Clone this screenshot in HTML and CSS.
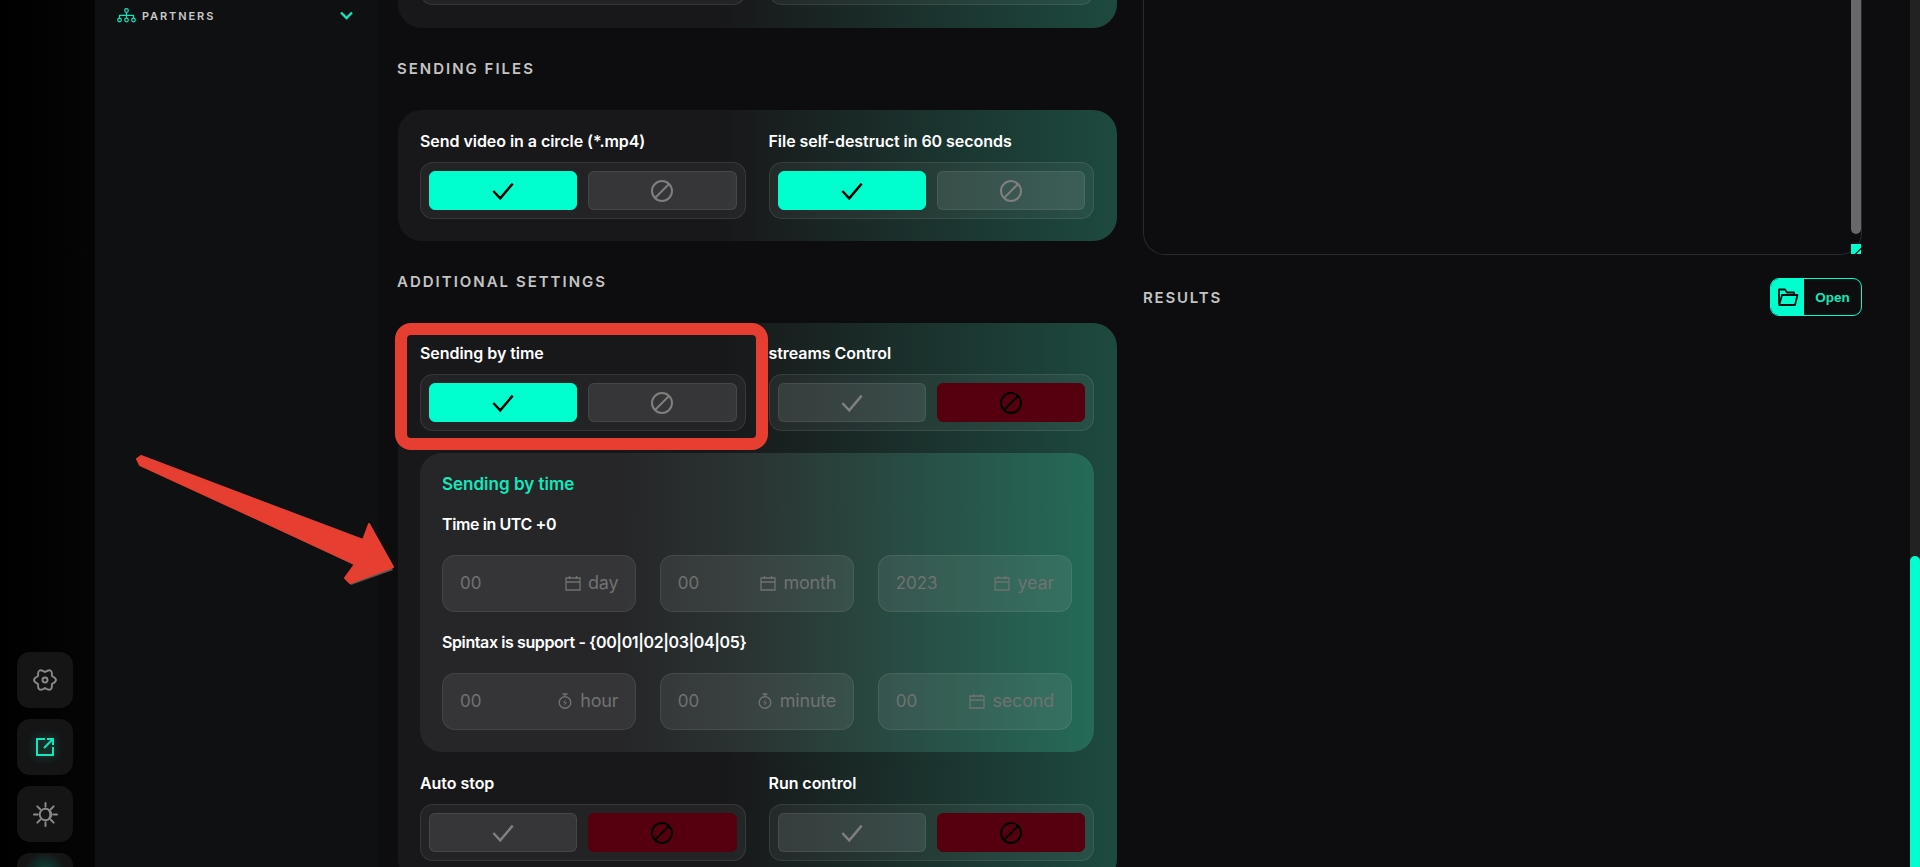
FILE: index.html
```html
<!DOCTYPE html>
<html lang="en">
<head>
    <meta charset="UTF-8">
    <meta name="viewport" content="width=device-width, initial-scale=1.0">
    <title>Settings</title>
    <link rel="stylesheet" href="styles.css">
</head>
<body>
    <div class="shell">
        <aside class="rail">
            <button class="rail-btn">
                <svg width="24" height="24" viewBox="0 0 24 24" fill="none" stroke="#8a8a8a" stroke-width="1.9" stroke-linejoin="round"><path d="M12 4Q19.5 -1 18.93 8Q27 12 18.93 16Q19.5 25 12 20Q4.5 25 5.07 16Q-3 12 5.07 8Q4.5 -1 12 4z"/><circle cx="12" cy="12" r="2.5"/></svg>
            </button>
            <button class="rail-btn">
                <svg class="glow" width="20" height="20" viewBox="0 0 20 20" fill="none" stroke="#10e8bb" stroke-width="2"><path d="M10 2H2v16h16v-8"/><path d="M9 11l8-8M12 2h6v6"/></svg>
            </button>
            <button class="rail-btn">
                <svg width="25" height="25" viewBox="0 0 26 26" fill="none" stroke="#8a8a8a" stroke-width="2" stroke-linecap="round"><path d="M13 1v4M13 21v4M1 13h4M21 13h4M4.5 4.5l3 3M18.5 18.5l3 3M4.5 21.5l3-3M18.5 7.5l3-3"/><circle cx="13" cy="13" r="6"/><path d="M14 7.5a5.5 5.5 0 0 1 0 11 6.5 6.500 0 0 0 0-11z" fill="#8a8a8a" stroke="none"/></svg>
            </button>
            <button class="rail-btn rail-btn-lit"></button>
        </aside>

        <nav class="sidebar">
            <div class="nav-item">
                <svg width="19" height="15" viewBox="0 0 19 15" fill="none" stroke="#10e8bb" stroke-width="1.2"><circle cx="9.5" cy="2.5" r="1.8"/><path d="M9.5 4.3v3M2.5 10V7.3h14V10M9.5 7.3V10"/><circle cx="2.5" cy="12" r="1.8"/><circle cx="9.5" cy="12" r="1.8"/><circle cx="16.5" cy="12" r="1.8"/></svg>
                <span class="nav-text">PARTNERS</span>
                <svg class="chevron" width="13" height="9" viewBox="0 0 13 9" fill="none" stroke="#10e8bb" stroke-width="2.4"><path d="M1 1.5l5.5 5.5L12 1.5"/></svg>
            </div>
        </nav>

        <main class="content">
            <section class="col">
                <div class="panel panel-cut">
                    <div class="fields">
                        <div class="toggle">
                            <div class="opt"></div>
                            <div class="opt"></div>
                        </div>
                        <div class="toggle">
                            <div class="opt"></div>
                            <div class="opt"></div>
                        </div>
                    </div>
                </div>

                <h2 class="section-title">SENDING FILES</h2>
                <div class="panel">
                    <div class="fields">
                        <div class="field">
                            <label class="field-label">Send video in a circle (*.mp4)</label>
                            <div class="toggle">
                                <div class="opt opt-on"><svg class="ico"><use href="#check"/></svg></div>
                                <div class="opt"><svg class="ico"><use href="#ban"/></svg></div>
                            </div>
                        </div>
                        <div class="field">
                            <label class="field-label">File self-destruct in 60 seconds</label>
                            <div class="toggle">
                                <div class="opt opt-on"><svg class="ico"><use href="#check"/></svg></div>
                                <div class="opt"><svg class="ico"><use href="#ban"/></svg></div>
                            </div>
                        </div>
                    </div>
                </div>

                <h2 class="section-title">ADDITIONAL SETTINGS</h2>
                <div class="panel panel-tight">
                    <div class="fields">
                        <div class="field">
                            <label class="field-label">Sending by time</label>
                            <div class="toggle">
                                <div class="opt opt-on"><svg class="ico"><use href="#check"/></svg></div>
                                <div class="opt"><svg class="ico"><use href="#ban"/></svg></div>
                            </div>
                        </div>
                        <div class="field">
                            <label class="field-label">streams Control</label>
                            <div class="toggle">
                                <div class="opt"><svg class="ico"><use href="#check"/></svg></div>
                                <div class="opt opt-off"><svg class="ico"><use href="#ban"/></svg></div>
                            </div>
                        </div>

                        <div class="subpanel">
                            <div class="sub-title">Sending by time</div>
                            <div class="field-label">Time in UTC +0</div>
                            <div class="inputs">
                                <div class="input"><span class="val">00</span><svg class="unit-ico"><use href="#cal"/></svg><span class="unit">day</span></div>
                                <div class="input"><span class="val">00</span><svg class="unit-ico"><use href="#cal"/></svg><span class="unit">month</span></div>
                                <div class="input"><span class="val">2023</span><svg class="unit-ico"><use href="#cal"/></svg><span class="unit">year</span></div>
                            </div>
                            <div class="field-label">Spintax is support - {00|01|02|03|04|05}</div>
                            <div class="inputs">
                                <div class="input"><span class="val">00</span><svg class="unit-ico"><use href="#timer"/></svg><span class="unit">hour</span></div>
                                <div class="input"><span class="val">00</span><svg class="unit-ico"><use href="#timer"/></svg><span class="unit">minute</span></div>
                                <div class="input"><span class="val">00</span><svg class="unit-ico"><use href="#cal"/></svg><span class="unit">second</span></div>
                            </div>
                        </div>

                        <div class="field">
                            <label class="field-label">Auto stop</label>
                            <div class="toggle">
                                <div class="opt"><svg class="ico"><use href="#check"/></svg></div>
                                <div class="opt opt-off"><svg class="ico"><use href="#ban"/></svg></div>
                            </div>
                        </div>
                        <div class="field">
                            <label class="field-label">Run control</label>
                            <div class="toggle">
                                <div class="opt"><svg class="ico"><use href="#check"/></svg></div>
                                <div class="opt opt-off"><svg class="ico"><use href="#ban"/></svg></div>
                            </div>
                        </div>
                    </div>
                </div>
            </section>

            <section class="col">
                <div class="log-box">
                    <div class="log-thumb"></div>
                    <div class="log-resize"></div>
                </div>
                <div class="results-head">
                    <h2 class="results-title">RESULTS</h2>
                    <button class="open-btn">
                        <span class="open-ico">
                            <svg width="22" height="20" viewBox="0 0 22 20" fill="none" stroke="#0b0b0d" stroke-width="1.8" stroke-linejoin="round"><path d="M2 17V2.5h6l2 3h7v2"/><path d="M5 8h15.5L18 18H2.2z"/></svg>
                        </span>
                        <span class="open-text">Open</span>
                    </button>
                </div>
            </section>
        </main>

        <div class="page-scroll"><div class="page-thumb"></div></div>

        <!-- annotation drawn on top of the screenshot -->
        <svg class="markup" width="1920" height="867" viewBox="0 0 1920 867">
            <path d="M141 465L356 566 346 579 351 585 393 570 371 526 364 542 141 457z" fill="#5a5654"/>
            <path d="M141 456L363 540 369 524 393 567 350 583 345 578 355 564 140 465 137 459z" fill="#e63e30" stroke="#e63e30" stroke-width="2" stroke-linejoin="round"/>
            <rect x="401" y="329" width="361" height="115" rx="10" fill="none" stroke="#e63e30" stroke-width="12"/>
        </svg>
    </div>

    <svg class="defs" width="0" height="0">
        <symbol id="check" viewBox="-1 -1 26 22"><path d="M1.5 10l7.5 8L22.5 2" fill="none" stroke="currentColor" stroke-width="2.6"/></symbol>
        <symbol id="ban" viewBox="1 1 22 22"><circle cx="12" cy="12" r="10" fill="none" stroke="currentColor" stroke-width="2"/><path d="M19 5L5 19" fill="none" stroke="currentColor" stroke-width="2"/></symbol>
        <symbol id="cal" viewBox="0 0 16 16"><path d="M1 3h14v12H1zM1 7h14M4.5 1v3M11.5 1v3" fill="none" stroke="currentColor" stroke-width="1.3"/></symbol>
        <symbol id="timer" viewBox="0 0 16 16"><circle cx="8" cy="9.5" r="5.8" fill="none" stroke="currentColor" stroke-width="1.4"/><path d="M5.5 1h5M8 1v2" fill="none" stroke="currentColor" stroke-width="1.4"/><path d="M8.8 6.5L6 10h2l-.8 3L10 9.5H8z" fill="currentColor"/></symbol>
    </svg>
</body>
</html>
```

FILE: styles.css
```css
* {
    box-sizing: border-box;
}
html, body {
    margin: 0;
    padding: 0;
    height: 100%;
    overflow: hidden;
    background-color: #0d0d0f;
}
body {
    font-family: Inter, "Liberation Sans", sans-serif;
    color: #fff;
}
.defs {
    position: absolute;
}
.shell {
    position: relative;
    display: flex;
    height: 867px;
    overflow: hidden;
}

/* left icon rail */
.rail {
    width: 95px;
    flex-shrink: 0;
    padding: 652px 0 0 17px;
    display: flex;
    flex-direction: column;
    gap: 11px;
    background: linear-gradient(90deg, #000 0%, #050505 100%);
}
.rail-btn {
    width: 56px;
    height: 56px;
    flex-shrink: 0;
    padding: 0;
    border: none;
    border-radius: 13px;
    background-color: #151516;
    display: flex;
    align-items: center;
    justify-content: center;
}
.rail-btn-lit {
    background: radial-gradient(circle at 50% 35%, #0d4a3e 0%, #151516 45%);
}
.glow {
    filter: drop-shadow(0 0 5px rgba(16, 232, 187, 0.5));
}

/* sidebar */
.sidebar {
    width: 283px;
    flex-shrink: 0;
    background-color: #0f1012;
}
.nav-item {
    display: flex;
    align-items: center;
    height: 31px;
    padding: 0 25px 0 22px;
}
.nav-text {
    margin-left: 6px;
    font-size: 11px;
    font-weight: 600;
    letter-spacing: 1.9px;
    color: #c9c9c9;
}
.chevron {
    margin-left: auto;
}

/* main area */
.content {
    flex: 1;
    display: grid;
    grid-template-columns: 719px 719px;
    column-gap: 26px;
    padding-left: 20px;
    margin-top: -52px;
}
.section-title {
    margin: 0 0 0 -1px;
    padding: 31px 0;
    font-size: 15px;
    line-height: 20px;
    font-weight: 600;
    letter-spacing: 2px;
    color: #c4c4c4;
}
.panel {
    padding: 23px 23px 22px 22px;
    border-radius: 24px;
    background: linear-gradient(90deg, #18181a 45%, #1d4a3f 100%);
}
.panel-cut {
    padding-top: 0;
    padding-bottom: 23px;
}
.panel-tight {
    padding-top: 22px;
}
.fields {
    display: grid;
    grid-template-columns: 1fr 1fr;
    column-gap: 23px;
    row-gap: 22px;
}
.field-label {
    display: block;
    height: 18px;
    font-size: 16px;
    line-height: 18px;
    font-weight: 600;
    letter-spacing: -0.4px;
    color: #fff;
}
.field .field-label {
    margin-bottom: 11px;
    line-height: 16px;
    letter-spacing: -0.05px;
}
.toggle {
    height: 57px;
    padding: 8px;
    display: grid;
    grid-template-columns: 1fr 1fr;
    column-gap: 11px;
    border: 1px solid rgba(255, 255, 255, 0.09);
    border-radius: 13px;
    background-color: rgba(255, 255, 255, 0.05);
}
.opt {
    display: flex;
    align-items: center;
    justify-content: center;
    border: 1px solid rgba(255, 255, 255, 0.08);
    border-radius: 6px;
    background-color: rgba(255, 255, 255, 0.09);
    color: #7f7f7f;
}
.opt-on {
    background-color: #00ffcf;
    border-color: #00ffcf;
    color: #000;
}
.opt-off {
    background-color: #56000f;
    border-color: #56000f;
    color: #000;
}
.ico {
    width: 24px;
    height: 22px;
}

/* sending by time box */
.subpanel {
    grid-column: 1 / -1;
    margin-bottom: 1px;
    padding: 22px;
    border-radius: 22px;
    background: linear-gradient(90deg, #262628 30%, #2a3533 50%, #256a58 100%);
}
.sub-title {
    height: 18px;
    margin-bottom: 22px;
    font-size: 17px;
    line-height: 18px;
    font-weight: 600;
    color: #14e8bb;
}
.inputs {
    display: grid;
    grid-template-columns: repeat(3, 1fr);
    column-gap: 23.5px;
    margin-top: 22px;
}
.inputs + .field-label {
    margin-top: 21px;
}
.input {
    height: 57px;
    padding: 0 17px 2px 17px;
    display: flex;
    align-items: center;
    border: 1px solid rgba(255, 255, 255, 0.08);
    border-radius: 13px;
    background-color: rgba(255, 255, 255, 0.07);
    color: #6f7270;
    font-size: 17px;
}
.val {
    margin-right: auto;
}
.unit {
    font-size: 18px;
    letter-spacing: -0.2px;
}
.unit-ico {
    width: 16px;
    height: 16px;
    margin-right: 7px;
}

/* right column */
.log-box {
    position: relative;
    height: 307px;
    border: 1px solid #2a2a2c;
    border-top: none;
    border-radius: 0 0 22px 22px;
}
.log-thumb {
    position: absolute;
    top: 0;
    right: 0;
    width: 10px;
    height: 286px;
    border-radius: 5px;
    background-color: #686868;
}
.log-resize {
    position: absolute;
    right: 0;
    bottom: 0;
    width: 10px;
    height: 10px;
    background: linear-gradient(135deg, #00ffcf 68%, #0b3a30 68%, #0b3a30 78%, #00ffcf 78%);
}
.results-head {
    margin-top: 23px;
    display: flex;
    align-items: center;
    justify-content: space-between;
}
.results-title {
    margin: 0;
    font-size: 15px;
    font-weight: 600;
    letter-spacing: 1.8px;
    color: #c4c4c4;
}
.open-btn {
    display: flex;
    width: 92px;
    height: 38px;
    padding: 0;
    border: 1px solid #00ffcf;
    border-radius: 9px;
    background: none;
    overflow: hidden;
}
.open-ico {
    width: 33px;
    height: 100%;
    display: flex;
    align-items: center;
    justify-content: center;
    background-color: #00ffcf;
}
.open-text {
    flex: 1;
    align-self: center;
    font-family: inherit;
    font-size: 13.5px;
    font-weight: 700;
    color: #14e8bb;
}

/* page scrollbar */
.page-scroll {
    position: absolute;
    top: 0;
    right: 0;
    width: 10px;
    height: 867px;
    padding-top: 556px;
    background-color: #222;
}
.page-thumb {
    height: 100%;
    border-radius: 5px 5px 0 0;
    background-color: #00ffcf;
}

.markup {
    position: absolute;
    top: 0;
    left: 0;
    pointer-events: none;
}
```
